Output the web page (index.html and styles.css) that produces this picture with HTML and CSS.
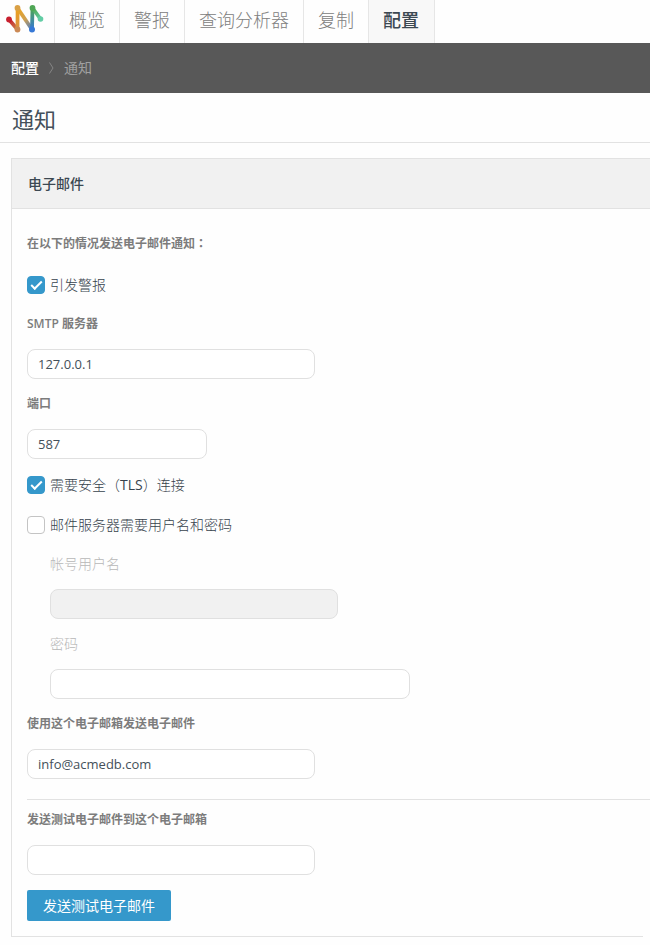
FILE: index.html
```html
<!DOCTYPE html>
<html lang="zh-CN">
<head>
<meta charset="utf-8">
<meta name="viewport" content="width=device-width, initial-scale=1">
<title>通知</title>
<link rel="stylesheet" href="styles.css">
</head>
<body>
<header class="topbar">
  <a class="logo" href="#" aria-label="首页">
    <svg width="40" height="34" viewBox="0 0 40 34" fill="none" stroke-linecap="round">
      <defs>
        <linearGradient id="g1" gradientUnits="userSpaceOnUse" x1="5" y1="17" x2="13" y2="28"><stop stop-color="#c8202f"/><stop offset="1" stop-color="#c98a4c"/></linearGradient>
        <linearGradient id="g2" gradientUnits="userSpaceOnUse" x1="13" y1="6" x2="13" y2="28"><stop stop-color="#eda31d"/><stop offset="1" stop-color="#d88f45"/></linearGradient>
        <linearGradient id="g3" gradientUnits="userSpaceOnUse" x1="13" y1="6" x2="28" y2="28"><stop stop-color="#eda31d"/><stop offset=".5" stop-color="#d0a050"/><stop offset="1" stop-color="#3678d6"/></linearGradient>
        <linearGradient id="g4" gradientUnits="userSpaceOnUse" x1="28" y1="6" x2="28" y2="28"><stop stop-color="#4fa64f"/><stop offset="1" stop-color="#3678d6"/></linearGradient>
        <linearGradient id="g5" gradientUnits="userSpaceOnUse" x1="28" y1="6" x2="36" y2="17"><stop stop-color="#4fa64f"/><stop offset="1" stop-color="#62cda5"/></linearGradient>
      </defs>
      <g stroke-width="3.800">
        <path d="M4 17.500 12.500 27.500" stroke="url(#g1)"/>
        <path d="M12.500 27.500 12.600 6" stroke="url(#g2)"/>
        <path d="M12.500 6 27 27.500" stroke="url(#g3)"/>
        <path d="M27 27.500 27.500 6" stroke="url(#g4)"/>
        <path d="M27.500 6 35.500 17" stroke="url(#g5)"/>
      </g>
      <circle cx="4" cy="17.500" r="2.900" fill="#c8202f"/>
      <circle cx="12.500" cy="6" r="2.900" fill="#d9a045"/>
      <circle cx="12.500" cy="27.500" r="2.900" fill="#cb8954"/>
      <circle cx="27.500" cy="6" r="2.900" fill="#4fa655"/>
      <circle cx="27" cy="27.500" r="3" fill="#3678d6"/>
      <circle cx="35.500" cy="17" r="2.800" fill="#62cda5"/>
    </svg>
  </a>
  <nav class="tabs">
    <a class="tab" href="#">概览</a>
    <a class="tab" href="#">警报</a>
    <a class="tab" href="#">查询分析器</a>
    <a class="tab" href="#">复制</a>
    <a class="tab tab-active" href="#" aria-current="page">配置</a>
  </nav>
</header>
<nav class="crumbs" aria-label="位置">
  <a class="crumb-link" href="#">配置</a>
  <svg class="crumb-arrow" width="5" height="12" viewBox="0 0 5 12" fill="none" stroke="#858585"><path d="M.5 .5 4 6 .5 11.500"/></svg>
  <span class="crumb-here">通知</span>
</nav>
<main>
  <h1 class="page-title">通知</h1>
  <section class="panel">
    <h2 class="panel-head">电子邮件</h2>
    <form class="panel-body">
      <p class="caption">在以下的情况发送电子邮件通知<span class="punct" lang="zh-TW">：</span></p>
      <label class="check"><input type="checkbox" checked>引发警报</label>
      <label class="caption" for="smtp">SMTP 服务器</label>
      <div class="field"><input class="text" id="smtp" type="text" value="127.0.0.1"></div>
      <label class="caption" for="port">端口</label>
      <div class="field"><input class="text text-short" id="port" type="text" value="587"></div>
      <label class="check"><input type="checkbox" checked><span>需要安全<span class="punct" lang="zh-TW">（<span class="latin">TLS</span>）</span>连接</span></label>
      <label class="check"><input type="checkbox">邮件服务器需要用户名和密码</label>
      <div class="nested">
        <label class="caption-off" for="user">帐号用户名</label>
        <div class="field"><input class="text" id="user" type="text" disabled></div>
        <label class="caption-off" for="pass">密码</label>
        <div class="field"><input class="text text-long" id="pass" type="password"></div>
      </div>
      <label class="caption" for="from">使用这个电子邮箱发送电子邮件</label>
      <div class="field"><input class="text" id="from" type="text" value="info@acmedb.com"></div>
      <hr class="rule">
      <label class="caption" for="test">发送测试电子邮件到这个电子邮箱</label>
      <div class="field"><input class="text" id="test" type="text"></div>
      <button class="send" type="button">发送测试电子邮件</button>
    </form>
    <div class="panel-end"></div>
  </section>
</main>
</body>
</html>
```
FILE: styles.css
```css
*,
*::before {
  box-sizing: border-box;
}

body {
  margin: 0;
  background: #fefefe;
  color: #44505a;
  font: 14px/20px "Open Sans", "Noto Sans CJK SC", sans-serif;
}

a {
  text-decoration: none;
}

.topbar {
  display: flex;
  height: 43px;
}

.logo {
  width: 54px;
  padding: 2px 0 0 5px;
}

.tabs {
  display: flex;
  border-right: 1px solid #e6e6e6;
}

.tab {
  padding: 0 14px;
  border-left: 1px solid #e6e6e6;
  color: #808080;
  font-size: 18px;
  font-weight: 300;
  line-height: 41px;
  white-space: nowrap;
}

.tab-active {
  padding-right: 15px;
  background: #f8f8f8;
  color: #3c4852;
  font-weight: 500;
}

.crumbs {
  display: flex;
  align-items: center;
  gap: 10px;
  height: 50px;
  padding: 0 11px;
  background: #585858;
}

.crumb-link {
  color: #fff;
  font-weight: 500;
}

.crumb-here {
  color: #a0a0a0;
  font-weight: 400;
}

.page-title {
  height: 50px;
  margin: 0;
  padding: 0 12px;
  border-bottom: 1px solid #e2e2e2;
  color: #44505a;
  font-size: 22px;
  font-weight: 400;
  line-height: 52px;
}

.panel {
  margin: 15px 0 0 11px;
  border-left: 1px solid #e2e2e2;
}

.panel-head {
  margin: 0;
  padding: 0 16px;
  border-top: 1px solid #e2e2e2;
  border-bottom: 1px solid #e2e2e2;
  background: #f1f1f1;
  color: #3c4852;
  font-size: 14px;
  font-weight: 500;
  line-height: 49px;
}

.panel-body {
  padding: 15px 0 15px 15px;
}

.caption,
.caption-off {
  display: block;
  margin: 0;
  line-height: 40px;
}

.caption {
  color: #7c7c7c;
  font-size: 12px;
  font-weight: 600;
}

.caption-off {
  color: #b8b8b8;
  font-weight: 300;
}

.punct {
  font-family: "Open Sans", "Noto Sans CJK TC", sans-serif;
}

.latin {
  font-weight: 400;
}

.check {
  display: flex;
  align-items: center;
  gap: 5px;
  height: 40px;
  padding-top: 2px;
  color: #36424c;
  font-weight: 300;
}

.check input {
  appearance: none;
  width: 18px;
  height: 18px;
  margin: 0;
  border: 1px solid #c4c4c4;
  border-radius: 4px;
  background: #fff;
}

.check input:checked {
  border-color: #3598cb;
  background: #3598cb;
}

.check input:checked::before {
  content: "";
  display: block;
  width: 11px;
  height: 6px;
  margin: 4px auto 0;
  border: solid #fff;
  border-width: 0 0 2px 2px;
  transform: rotate(-45deg);
}

.field {
  display: flex;
  align-items: center;
  height: 40px;
}

.text {
  width: 288px;
  max-width: 100%;
  height: 30px;
  padding: 0 10px;
  border: 1px solid #e0e0e0;
  border-radius: 8px;
  background: #fff;
  color: #44505a;
  font: 13px/20px "Open Sans", "Noto Sans CJK SC", sans-serif;
}

.text:disabled {
  background: #f1f1f1;
}

.text-short {
  width: 180px;
}

.text-long {
  width: 360px;
}

.nested {
  padding-left: 23px;
}

.rule {
  margin: 15px 0 0;
  border: 0;
  border-top: 1px solid #e2e2e2;
}

.send {
  display: block;
  height: 31px;
  margin-top: 10px;
  padding: 0 16px;
  border: 0;
  border-radius: 2px;
  background: #3598cb;
  color: #fff;
  font: 14px/20px "Open Sans", "Noto Sans CJK SC", sans-serif;
}

.panel-end {
  margin-right: 7px;
  border-bottom: 1px solid #e2e2e2;
}
```
